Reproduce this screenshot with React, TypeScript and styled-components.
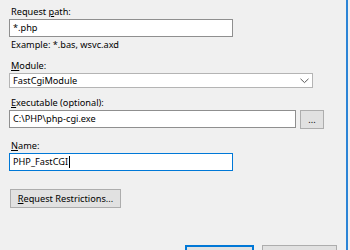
import React from "react";
import styled, { createGlobalStyle } from "styled-components";

const GlobalStyle = createGlobalStyle`
  html, body {
    margin: 0;
    padding: 0;
    background: #f0f0f0;
  }
  body {
    font-family: "Noto Sans", "Open Sans", sans-serif;
    font-size: 9.2px;
    color: #000;
  }
`;

const Window = styled.div`
  width: 348px;
  height: 250px;
  overflow: hidden;
  background: #f0f0f0;
  border-right: 2px solid #2b84d6;
  display: flex;
  flex-direction: column;
  padding: 4px 0 0 9px;
  box-sizing: border-box;
`;

const Label = styled.div<{ gap?: number }>`
  line-height: 15px;
  height: 15px;
  margin-top: ${(p) => p.gap ?? 0}px;
  padding-left: 2px;
  white-space: nowrap;
`;

const Hint = styled.div`
  line-height: 15px;
  height: 15px;
  padding-left: 2px;
`;

const Key = styled.span`
  text-decoration: underline;
  text-underline-offset: 1px;
`;

const TextBox = styled.div<{ width: number; focused?: boolean }>`
  width: ${(p) => p.width}px;
  height: 18px;
  box-sizing: border-box;
  background: #fff;
  border: 1px solid ${(p) => (p.focused ? "#0078d7" : "#8f8f8f")};
  padding: 0 3px;
  line-height: 16px;
  white-space: nowrap;
  display: flex;
  align-items: center;
`;

const Caret = styled.span`
  display: inline-block;
  width: 1px;
  height: 12px;
  background: #000;
  margin-left: 1px;
`;

const ComboBox = styled.div`
  width: 304px;
  height: 18px;
  box-sizing: border-box;
  background: #fff;
  border: 1px solid #b4b4b4;
  padding: 0 3px;
  display: flex;
  align-items: center;
  justify-content: space-between;
`;

const Row = styled.div`
  display: flex;
  align-items: flex-start;
  gap: 4px;
`;

const PushButton = styled.button<{ width: number; height?: number; primary?: boolean }>`
  width: ${(p) => p.width}px;
  height: ${(p) => p.height ?? 19}px;
  box-sizing: border-box;
  background: #e1e1e1;
  border: ${(p) => (p.primary ? "2px solid #0078d7" : "1px solid #adadad")};
  font-family: inherit;
  font-size: 9.2px;
  color: #000;
  padding: 0;
  display: flex;
  align-items: center;
  justify-content: center;
  line-height: 15px;
  white-space: nowrap;
  flex-shrink: 0;
`;

const RestrictButton = styled(PushButton)`
  margin-top: 18px;
  margin-left: 1px;
`;

const Footer = styled.div`
  display: flex;
  gap: 8px;
  margin-top: 37px;
  margin-left: 176px;
`;

const Chevron = () => (
  <svg width="9" height="6" viewBox="0 0 9 6">
    <path d="M0.5 0.8 L4.5 4.6 L8.5 0.8" fill="none" stroke="#5a5a5a" strokeWidth="1" />
  </svg>
);

export default function App() {
  return (
    <>
      <GlobalStyle />
      <Window>
        <Label>
          Request <Key>p</Key>ath:
        </Label>
        <TextBox width={224}>*.php</TextBox>
        <Hint>Example: *.bas, wsvc.axd</Hint>
        <Label gap={6}>
          <Key>M</Key>odule:
        </Label>
        <ComboBox>
          <span>FastCgiModule</span>
          <Chevron />
        </ComboBox>
        <Label gap={7}>
          <Key>E</Key>xecutable (optional):
        </Label>
        <Row>
          <TextBox width={287}>C:\PHP\php-cgi.exe</TextBox>
          <PushButton width={24}>...</PushButton>
        </Row>
        <Label gap={9}>
          <Key>N</Key>ame:
        </Label>
        <TextBox width={224} focused>
          PHP_FastCGI
          <Caret />
        </TextBox>
        <RestrictButton width={111}>
          <span>
            <Key>R</Key>equest Restrictions...
          </span>
        </RestrictButton>
        <Footer>
          <PushButton width={69} height={22} primary>
            OK
          </PushButton>
          <PushButton width={75} height={22}>
            Cancel
          </PushButton>
        </Footer>
      </Window>
    </>
  );
}
